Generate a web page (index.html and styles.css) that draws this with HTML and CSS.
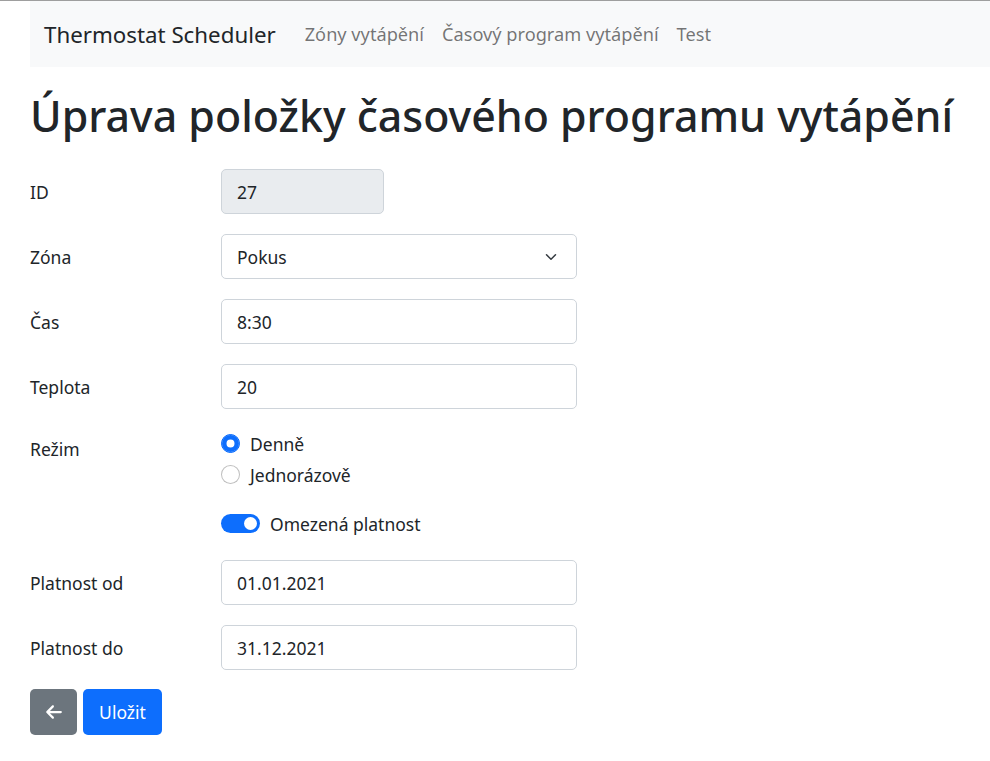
FILE: index.html
```html
<!DOCTYPE html>
<html lang="cs">
<head>
<meta charset="utf-8">
<title>Thermostat Scheduler</title>
<link rel="stylesheet" href="styles.css">
</head>
<body>
<div class="topline"></div>
<div class="page">
  <nav class="navbar">
    <span class="brand">Thermostat Scheduler</span>
    <a class="nav-link" href="#">Zóny vytápění</a>
    <a class="nav-link" href="#">Časový program vytápění</a>
    <a class="nav-link" href="#">Test</a>
  </nav>
  <h1 class="title">Úprava položky časového programu vytápění</h1>
  <form class="form">
    <div class="row">
      <label class="label">ID</label>
      <div class="field small"><div class="input disabled">27</div></div>
    </div>
    <div class="row">
      <label class="label">Zóna</label>
      <div class="field"><div class="input select">Pokus
        <svg class="chevron" viewBox="0 0 16 16" width="16" height="12"><path d="M2 5l6 6 6-6" fill="none" stroke="#343a40" stroke-width="2" stroke-linecap="round" stroke-linejoin="round"/></svg>
      </div></div>
    </div>
    <div class="row">
      <label class="label">Čas</label>
      <div class="field"><div class="input">8:30</div></div>
    </div>
    <div class="row">
      <label class="label">Teplota</label>
      <div class="field"><div class="input">20</div></div>
    </div>
    <div class="row radios-row">
      <label class="label">Režim</label>
      <div class="field radios">
        <div class="check"><span class="radio on"></span><span>Denně</span></div>
        <div class="check"><span class="radio"></span><span>Jednorázově</span></div>
      </div>
    </div>
    <div class="row switch-row">
      <span class="label"></span>
      <div class="field"><div class="check"><span class="switch"><span class="knob"></span></span><span>Omezená platnost</span></div></div>
    </div>
    <div class="row">
      <label class="label">Platnost od</label>
      <div class="field"><div class="input">01.01.2021</div></div>
    </div>
    <div class="row">
      <label class="label">Platnost do</label>
      <div class="field"><div class="input">31.12.2021</div></div>
    </div>
    <div class="buttons">
      <span class="btn btn-back"><svg viewBox="0 0 448 512" width="18" height="18"><path fill="#fff" d="M9.4 233.4c-12.5 12.5-12.5 32.8 0 45.3l160 160c12.5 12.5 32.8 12.5 45.3 0s12.5-32.8 0-45.3L109.2 288H416c17.7 0 32-14.3 32-32s-14.3-32-32-32H109.3L214.6 118.6c12.5-12.5 12.5-32.8 0-45.3s-32.8-12.5-45.3 0l-160 160z"/></svg></span>
      <span class="btn btn-primary">Uložit</span>
    </div>
  </form>
</div>
</body>
</html>
```
FILE: styles.css
```css
* { box-sizing: border-box; }
html, body { margin: 0; padding: 0; background: #fff; }
body {
  font-family: "Noto Sans", "Open Sans", sans-serif;
  font-size: 17.5px;
  color: #212529;
}
.topline { height: 1px; background: #9e9e9e; }
.page { padding-left: 30px; }
.navbar {
  display: flex;
  align-items: center;
  height: 66px;
  background: #f8f9fa;
  padding-left: 14px;
}
.brand {
  font-size: 22.3px;
  color: #212529;
  margin-right: 20px;
}
.nav-link {
  color: rgba(0,0,0,.55);
  text-decoration: none;
  padding: 0 9px;
  font-size: 18.2px;
}
.title {
  font-size: 42.9px;
  font-weight: 500;
  line-height: 1.2;
  margin: 23px 0 28px 0;
  letter-spacing: 0;
}
.form { display: flex; flex-direction: column; }
.row {
  display: grid;
  grid-template-columns: 191px 356px;
  align-items: center;
  margin-bottom: 20px;
}
.label { font-size: 17.5px; }
.field.small { width: 163px; }
.input {
  height: 45px;
  border: 1px solid #ced4da;
  border-radius: 5px;
  padding: 0 15px;
  display: flex;
  align-items: center;
  background: #fff;
}
.input.disabled { background: #e9ecef; }
.input.select { justify-content: space-between; }
.chevron { margin-right: 2px; }
.radios-row { align-items: start; margin-bottom: 20px; }
.radios-row .label { padding-top: 8px; }
.radios { display: flex; flex-direction: column; gap: 2px; padding-top: 0; }
.check { display: flex; align-items: center; gap: 10px; height: 29px; }
.radio {
  width: 19px; height: 19px;
  border-radius: 50%;
  border: 1px solid rgba(0,0,0,.25);
  background: #fff;
  display: inline-block;
  flex: none;
}
.radio.on {
  background: #0d6efd;
  border-color: #0d6efd;
  box-shadow: inset 0 0 0 4.5px #0d6efd, inset 0 0 0 10px #fff;
}
.switch-row { margin-bottom: 22px; }
.switch {
  width: 39px; height: 19px;
  border-radius: 10px;
  background: #0d6efd;
  display: inline-flex;
  align-items: center;
  justify-content: flex-end;
  padding-right: 3px;
  flex: none;
}
.knob { width: 13px; height: 13px; border-radius: 50%; background: #fff; }
.buttons { display: flex; gap: 6px; margin-top: -1px; }
.btn {
  height: 46px;
  border-radius: 5px;
  display: inline-flex;
  align-items: center;
  justify-content: center;
  color: #fff;
  font-size: 17.5px;
}
.btn-back { width: 47px; background: #6c757d; }
.btn-primary { width: 79px; background: #0d6efd; }
```
